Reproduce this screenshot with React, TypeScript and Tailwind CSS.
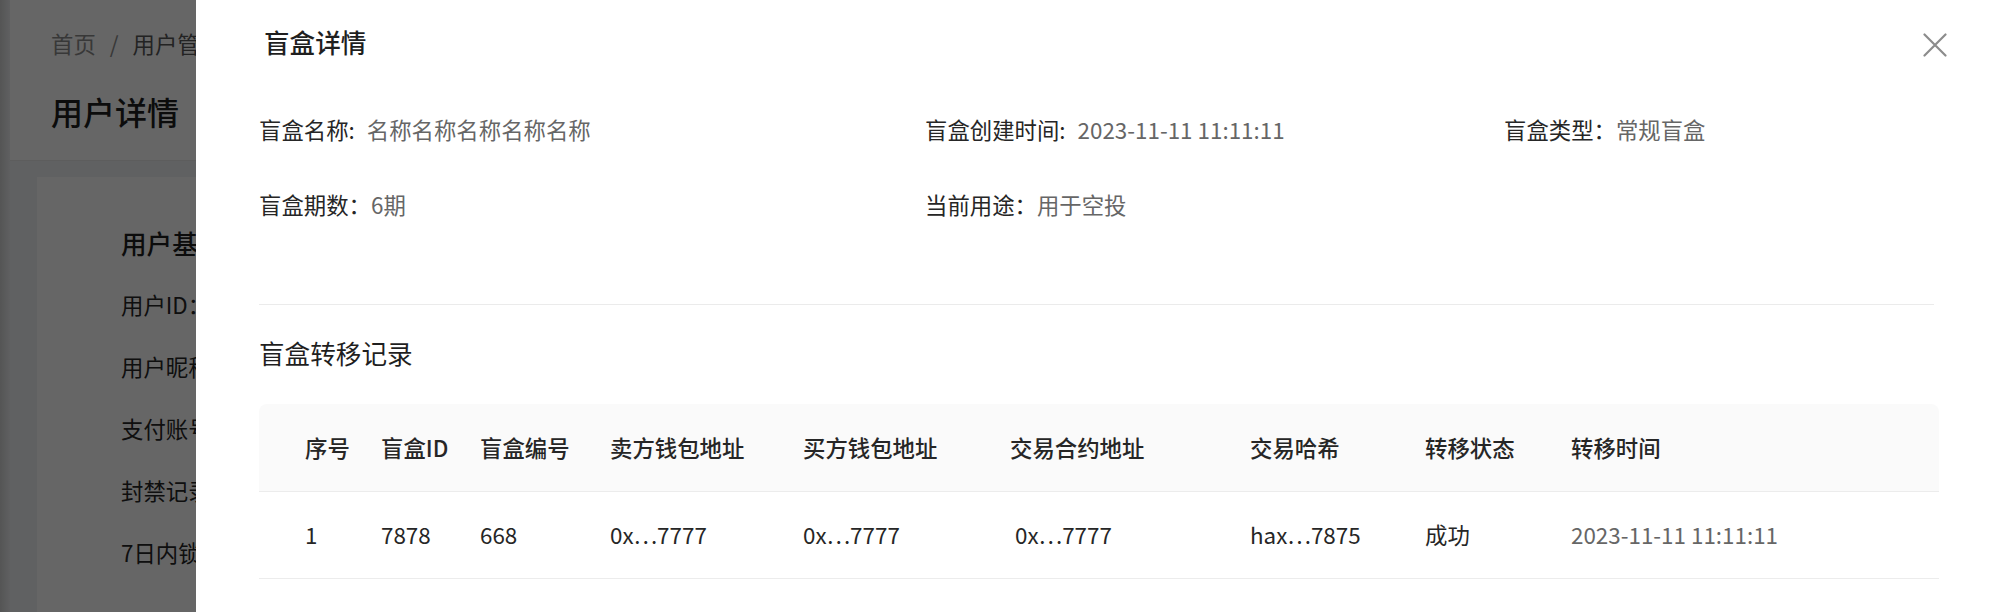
import React from "react";

const font = "font-['Noto_Sans_CJK_SC','Noto_Sans',sans-serif]";

function CloseIcon() {
  return (
    <svg width="24" height="24" viewBox="0 0 24 24" fill="none">
      <path d="M1.5 1.5L22.5 22.5M22.5 1.5L1.5 22.5" stroke="#8c8c8c" strokeWidth="2.2" strokeLinecap="round" />
    </svg>
  );
}

function Info({ label, value, gap }: { label: string; value: string; gap?: boolean }) {
  return (
    <div className="flex items-center h-[75px] text-[22.4px] leading-none whitespace-pre">
      <span className="text-[#262626]">{label}</span>
      <span className={`text-[#666666] ${gap ? "pl-[7px]" : ""}`}>{value}</span>
    </div>
  );
}

const headers = ["序号", "盲盒ID", "盲盒编号", "卖方钱包地址", "买方钱包地址", "交易合约地址", "交易哈希", "转移状态", "转移时间"];
const row = ["1", "7878", "668", "0x…7777", "0x…7777", " 0x…7777", "hax…7875", "成功", "2023-11-11 11:11:11"];

const gridCols = "grid grid-cols-[76px_99px_130px_193px_207px_240px_175px_146px_1fr] pl-[46px] items-center";

export default function App() {
  return (
    <div className={`relative w-[2004px] h-[612px] overflow-hidden bg-[#f0f2f5] ${font}`}>
      {/* background page */}
      <div className="flex h-full">
        <div className="w-[10px] h-full bg-gradient-to-r from-[#d4d4d4] to-[#eef0f3]" />
        <div className="flex-1 flex flex-col">
          <div className="h-[161px] bg-white border-b border-[#e8e8e8] pl-[41px] flex flex-col">
            <div className="h-[87px] flex items-center text-[22.4px] text-[#8c8c8c] gap-[14px]">
              <span>首页</span>
              <span>/</span>
              <span className="text-[#595959]">用户管理</span>
            </div>
            <div className="h-[48px] flex items-center text-[32px] font-medium text-[#1f1f1f]">用户详情</div>
          </div>
          <div className="flex-1 pt-[16px] pl-[27px]">
            <div className="bg-white h-full pl-[84px] pt-[46px] flex flex-col">
              <div className="h-[40px] flex items-center text-[25.6px] font-medium text-[#1f1f1f]">用户基本信息</div>
              {["用户ID：", "用户昵称：", "支付账号：", "封禁记录：", "7日内锁定次数："].map((t, i) => (
                <div key={i} className="flex items-center text-[22.4px] text-[#262626] mt-[22px] h-[40px]">
                  {t}
                </div>
              ))}
            </div>
          </div>
        </div>
      </div>

      {/* mask */}
      <div className="absolute inset-0 bg-black/60" />

      {/* drawer */}
      <div className="absolute top-0 right-0 bottom-0 w-[1808px] bg-white flex flex-col">
        <div className="h-[84px] flex items-center justify-between pl-[68px] pr-[57px]">
          <div className="text-[25.6px] font-medium text-[#1f1f1f] leading-none">盲盒详情</div>
          <div className="mt-[6px]">
            <CloseIcon />
          </div>
        </div>
        <div className="pl-[63px] pr-[65px] flex flex-col">
          <div className="grid grid-cols-[666px_579px_1fr] pt-[8px]">
            <Info label="盲盒名称: " value="名称名称名称名称名称" gap />
            <Info label="盲盒创建时间: " value="2023-11-11 11:11:11" gap />
            <Info label="盲盒类型：" value="常规盲盒" />
            <Info label="盲盒期数：" value="6期" />
            <Info label="当前用途：" value="用于空投" />
            <div />
          </div>
          <div className="mt-[62px] mr-[5px] h-px bg-[#ebebeb]" />
          <div className="mt-[30px] h-[36px] flex items-center text-[25.6px] text-[#1f1f1f]">盲盒转移记录</div>
          <div className="mt-[33px]">
            <div className={`${gridCols} h-[88px] bg-[#fafafa] rounded-t-[8px] border-b border-[#ececec] text-[22.4px] font-medium text-[#262626]`}>
              {headers.map((h) => (
                <div key={h}>{h}</div>
              ))}
            </div>
            <div className={`${gridCols} h-[87px] border-b border-[#ececec] text-[22.4px] text-[#262626]`}>
              {row.map((c, i) => (
                <div key={i} className={`whitespace-pre ${i === 8 ? "text-[#666666]" : ""}`}>{c}</div>
              ))}
            </div>
          </div>
        </div>
      </div>
    </div>
  );
}
